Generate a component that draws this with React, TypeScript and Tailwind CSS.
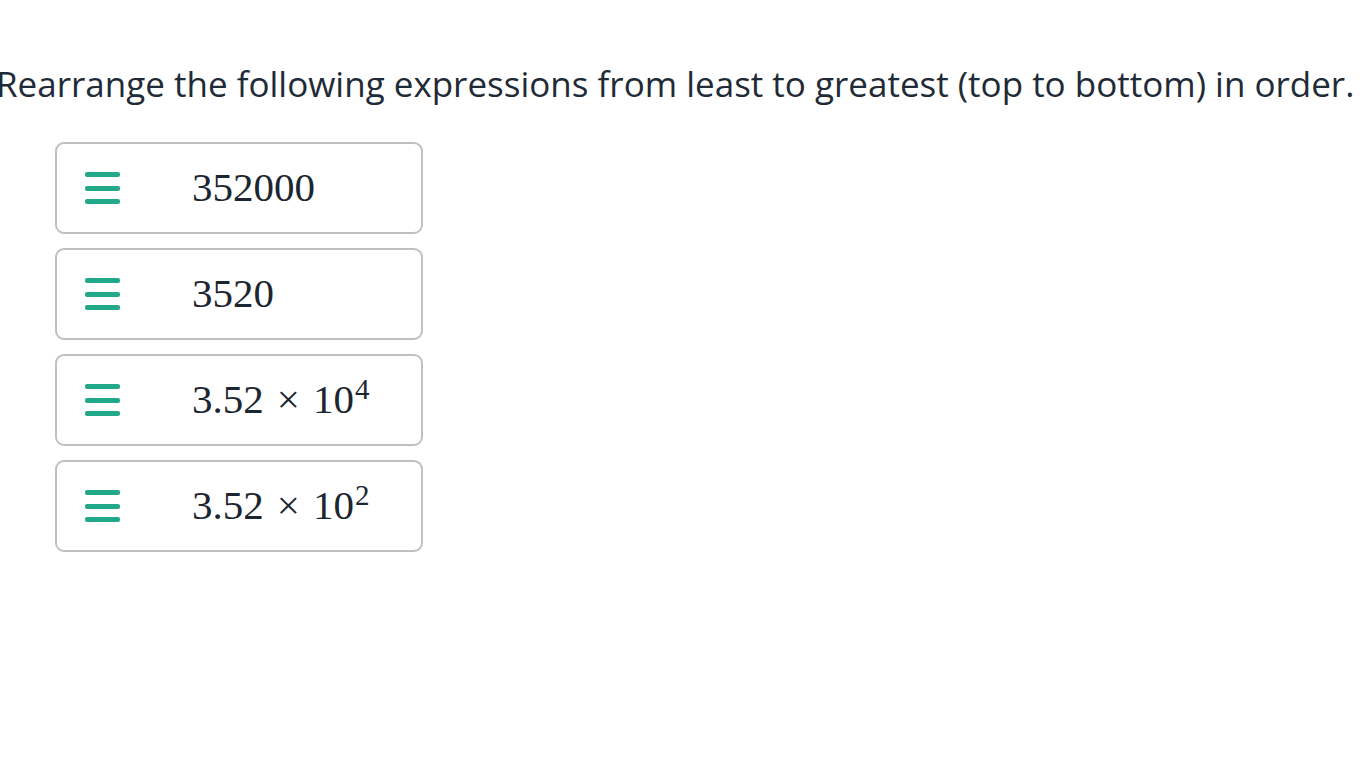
import React from 'react';

const items: { base: string; exp?: string }[] = [
  { base: '352000' },
  { base: '3520' },
  { base: '3.52', exp: '4' },
  { base: '3.52', exp: '2' },
];

function Grip() {
  return (
    <div className="flex w-[35px] flex-col gap-[8.5px]">
      <span className="block h-[5px] rounded-[2px] bg-[#21a98a]" />
      <span className="block h-[5px] rounded-[2px] bg-[#21a98a]" />
      <span className="block h-[5px] rounded-[2px] bg-[#21a98a]" />
    </div>
  );
}

export default function App() {
  return (
    <div className="min-h-screen bg-white pt-[58px]">
      <p className="-ml-[4px] whitespace-nowrap font-['Open_Sans',sans-serif] text-[35px] leading-[52px] text-[#1f2b37]">
        Rearrange the following expressions from least to greatest (top to bottom) in order.
      </p>
      <div className="mt-[32px] ml-[55px] flex w-[368px] flex-col gap-[14px]">
        {items.map((it, i) => (
          <div
            key={i}
            className="flex h-[92px] items-center rounded-[9px] border-2 border-[#c0c0c0] bg-white pl-[28px]"
          >
            <Grip />
            <div className="ml-[72px] font-['Liberation_Serif',serif] text-[41px] text-[#1c2631]">
              {it.exp ? (
                <span>
                  {it.base}
                  <span className="mx-[13px]">×</span>
                  10
                  <sup className="relative -top-[14px] ml-[1px] align-baseline text-[29px]">{it.exp}</sup>
                </span>
              ) : (
                it.base
              )}
            </div>
          </div>
        ))}
      </div>
    </div>
  );
}
